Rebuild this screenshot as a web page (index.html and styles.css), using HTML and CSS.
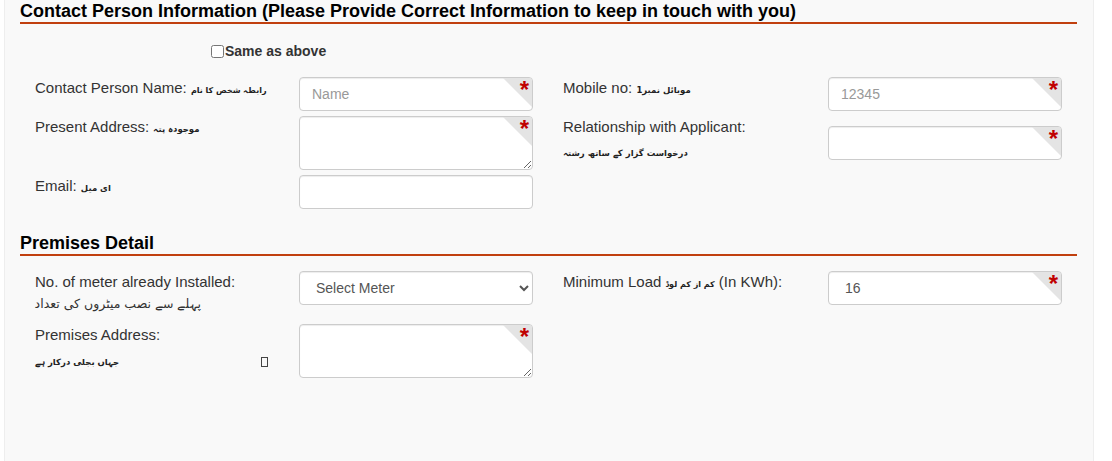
FILE: index.html
```html
<!DOCTYPE html>
<html lang="en">
<head>
  <meta charset="utf-8">
  <title>Contact Person Information</title>
  <link rel="stylesheet" href="styles.css">
</head>
<body>
  <div class="panel">

    <div class="heading">Contact Person Information (Please Provide Correct Information to keep in touch with you)</div>

    <div class="same-row">
      <input type="checkbox" id="same" class="check">
      <label for="same">Same as above</label>
    </div>

    <div class="columns contact">
      <div class="column">
        <div class="row">
          <label class="label">Contact Person Name: <span class="urdu tight">رابطہ شخص کا نام</span></label>
          <div class="field required"><input class="input" placeholder="Name"></div>
        </div>
        <div class="row">
          <label class="label">Present Address: <span class="urdu">موجودہ پتہ</span></label>
          <div class="field required"><textarea class="input area"></textarea></div>
        </div>
        <div class="row">
          <label class="label">Email: <span class="urdu">ای میل</span></label>
          <div class="field"><input class="input"></div>
        </div>
      </div>
      <div class="column">
        <div class="row">
          <label class="label">Mobile no: <span class="urdu">موبائل نمبر1</span></label>
          <div class="field required"><input class="input" placeholder="12345"></div>
        </div>
        <div class="row">
          <label class="label">Relationship with Applicant:
            <span class="urdu block-far">درخواست گزار کے ساتھ رشتہ</span>
          </label>
          <div class="field required pushed"><input class="input"></div>
        </div>
      </div>
    </div>

    <div class="heading second">Premises Detail</div>

    <div class="columns premises">
      <div class="column">
        <div class="row">
          <label class="label">No. of meter already Installed:
            <span class="urdu-thin">پہلے سے نصب میٹروں کی تعداد</span>
          </label>
          <div class="field">
            <select class="input select"><option>Select Meter</option></select>
          </div>
        </div>
        <div class="row">
          <label class="label">Premises Address:
            <span class="urdu-line">
              <span class="urdu">جہاں بجلی درکار ہے</span>
              <span class="tofu"></span>
            </span>
          </label>
          <div class="field required"><textarea class="input area"></textarea></div>
        </div>
      </div>
      <div class="column">
        <div class="row">
          <label class="label">Minimum Load <span class="urdu tight">کم از کم لوڈ</span> (In KWh):</label>
          <div class="field required"><input class="input value" value="16"></div>
        </div>
      </div>
    </div>

  </div>
</body>
</html>
```

FILE: styles.css
```css
html, body {
  margin: 0;
  height: 100%;
  overflow: hidden;
  background: #fff;
}
body {
  font-family: "Liberation Sans", Arial, sans-serif;
  font-size: 15px;
  color: #333;
}
.panel {
  box-sizing: border-box;
  width: 1090px;
  height: 100%;
  margin-left: 4px;
  padding: 0 16px 0 15px;
  background: #f9f9f9;
  border-left: 1px solid #eee;
  border-right: 1px solid #eee;
}
.heading {
  height: 22px;
  line-height: 23px;
  font-size: 18px;
  font-weight: bold;
  color: #000;
  border-bottom: 2px solid #c1400f;
}
.second {
  margin-top: 24px;
  height: 21px;
  line-height: 21px;
}
.same-row {
  display: flex;
  align-items: center;
  height: 18px;
  margin-top: 18px;
  padding-left: 191px;
  font-size: 14px;
  font-weight: bold;
  color: #333;
}
.check {
  width: 13px;
  height: 13px;
  margin: 0 1px 0 0;
}
.columns {
  display: grid;
  grid-template-columns: 528px 1fr;
}
.contact {
  margin-top: 17px;
}
.premises {
  margin-top: 15px;
}
.column {
  display: flex;
  flex-direction: column;
  gap: 5px;
}
.row {
  display: grid;
  grid-template-columns: 264px 234px;
  padding-left: 15px;
}
.column + .column .row {
  grid-template-columns: 265px 234px;
}
.label {
  display: block;
  padding-top: 1px;
  line-height: 20px;
}
.urdu {
  font-family: "DejaVu Sans", sans-serif;
  font-size: 8.5px;
  font-weight: bold;
  color: #222;
}
.tight {
  font-size: 8px;
}
.block-far {
  display: block;
  margin-top: 6px;
}
.urdu-thin {
  display: block;
  direction: rtl;
  width: 166px;
  margin: 2px 0 5px;
  font-family: "DejaVu Sans", sans-serif;
  font-size: 12.5px;
  line-height: 20px;
  white-space: nowrap;
}
.urdu-line {
  display: flex;
  align-items: center;
  justify-content: space-between;
  margin-top: 7px;
  padding-right: 31px;
}
.tofu {
  box-sizing: border-box;
  width: 7px;
  height: 10px;
  border: 1px solid #444;
}
.field {
  position: relative;
}
.pushed {
  margin-top: 10px;
}
.input {
  display: block;
  box-sizing: border-box;
  width: 100%;
  height: 34px;
  padding: 6px 12px;
  font-family: "Liberation Sans", Arial, sans-serif;
  font-size: 14px;
  color: #555;
  background: #fff;
  border: 1px solid #ccc;
  border-radius: 4px;
  box-shadow: inset 0 1px 1px rgba(0, 0, 0, .075);
}
.input::placeholder {
  color: #999;
}
.area {
  height: 54px;
}
.select {
  padding-left: 12px;
}
.value {
  padding-left: 16px;
}
.required::before {
  content: "";
  position: absolute;
  top: 1px;
  right: 1px;
  z-index: 1;
  border-style: solid;
  border-width: 0 29px 29px 0;
  border-color: transparent #e4e4e4 transparent transparent;
  border-top-right-radius: 3px;
}
.required::after {
  content: "*";
  position: absolute;
  top: 1px;
  right: 4px;
  z-index: 2;
  font-size: 24px;
  line-height: 24px;
  font-weight: bold;
  color: #c00000;
}
```
